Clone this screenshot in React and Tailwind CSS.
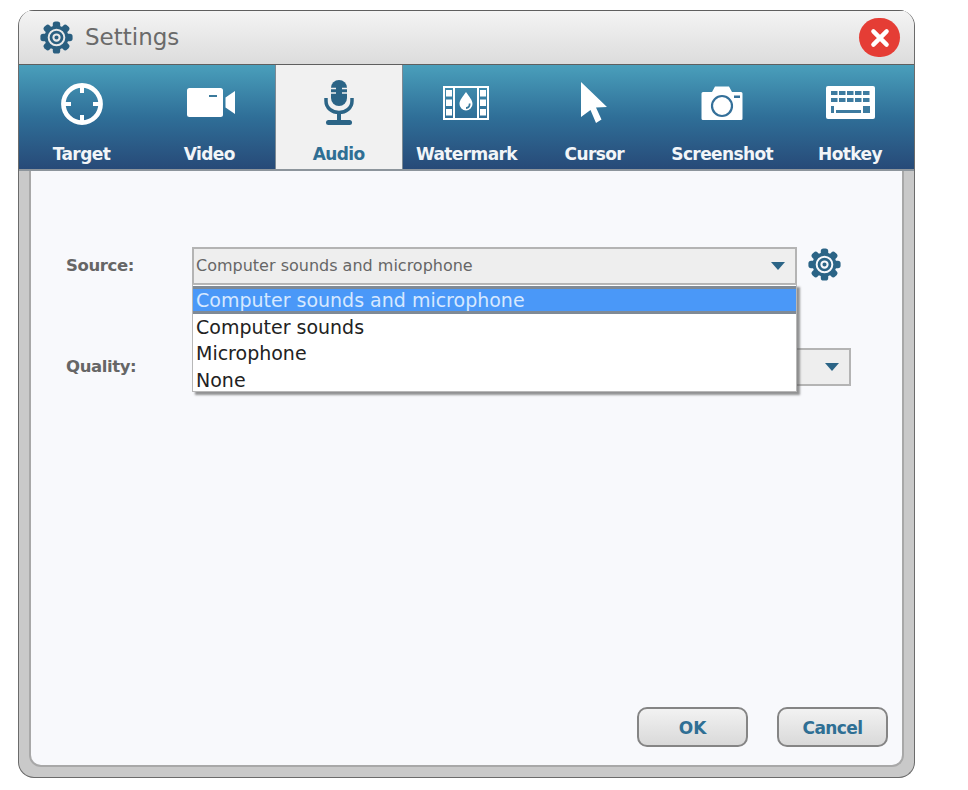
import React from 'react';

const Gear = ({ className, color = '#2b6486', hole = '#f8f9fc' }) => (
  <svg viewBox="0 0 32 32" className={className}>
    <g fill={color}>
      {[0, 45, 90, 135, 180, 225, 270, 315].map((a) => (
        <rect key={a} x="12.4" y="0.4" width="7.2" height="8" rx="2.6" transform={`rotate(${a} 16 16)`} />
      ))}
      <circle cx="16" cy="16" r="11.6" />
    </g>
    <circle cx="16" cy="16" r="7.6" fill="none" stroke={hole} strokeWidth="1.9" />
    <circle cx="16" cy="16" r="3" fill="none" stroke={hole} strokeWidth="2" />
  </svg>
);

const TargetIcon = () => (
  <svg viewBox="0 0 44 44" className="w-[44px] h-[44px] mt-[3px] ml-[2px]">
    <circle cx="22" cy="22" r="18.6" fill="none" stroke="#fff" strokeWidth="4.6" />
    <path d="M22 4v7M22 33v7M4 22h7M33 22h7" stroke="#fff" strokeWidth="4" />
  </svg>
);

const VideoIcon = () => (
  <svg viewBox="0 0 48 30" className="w-[48px] h-[30px] ml-[3px]">
    <rect x="0" y="0" width="36" height="29" rx="2.5" fill="#fff" />
    <rect x="22" y="7" width="8" height="2" fill="#3b7a9c" />
    <path d="M38.500 9.500L48 3v23l-9.500-6.500z" fill="#fff" />
  </svg>
);

const MicIcon = () => (
  <svg viewBox="0 0 30 46" className="w-[30px] h-[46px]">
    <rect x="7" y="0" width="16" height="26" rx="8" fill="#2b6486" />
    <path d="M5 8.500h7M18 8.500h7M5 13h7M18 13h7" stroke="#f1f1f1" strokeWidth="1.500" />
    <path d="M2 18v3c0 7 6 11.500 13 11.500S28 28 28 21v-3" fill="none" stroke="#2b6486" strokeWidth="3.500" />
    <rect x="13" y="32" width="4" height="8" fill="#2b6486" />
    <rect x="2" y="40" width="26" height="5" rx="2.500" fill="#2b6486" />
  </svg>
);

const WatermarkIcon = () => (
  <svg viewBox="0 0 46 34" className="w-[46px] h-[34px]">
    <rect x="1" y="1" width="44" height="32" fill="none" stroke="#fff" strokeWidth="2" />
    <path d="M11 1v32M35 1v32" stroke="#fff" strokeWidth="2" />
    {[4, 13.500, 23].map((y) => (
      <g key={y} fill="#fff">
        <rect x="3" y={y} width="6" height="6.500" />
        <rect x="37" y={y} width="6" height="6.500" />
      </g>
    ))}
    <path d="M23 6c3.500 5 6.500 8 6.500 12a6.500 6.500 0 0 1-13 0c0-4 3-7 6.500-12z" fill="#fff" />
    <path d="M26.500 17.500a3.500 3.500 0 0 1-3.500 4.500" fill="none" stroke="#3b7a9c" strokeWidth="1.800" />
  </svg>
);

const CursorIcon = () => (
  <svg viewBox="0 0 28 42" className="w-[28px] h-[42px]">
    <path d="M1 0l26 25-11 0.500 5.500 12-5.500 3.500-5.500-13L1 35z" fill="#fff" />
  </svg>
);

const CameraIcon = () => (
  <svg viewBox="0 0 42 34" className="w-[42px] h-[34px]">
    <path d="M2 6h9l3-5.500h14l3 5.500h9a1.500 1.500 0 0 1 1.500 1.500v25A1.500 1.500 0 0 1 40 34H2a1.500 1.500 0 0 1-1.500-1.500v-25A1.500 1.500 0 0 1 2 6z" fill="#fff" />
    <circle cx="21" cy="20" r="10" fill="none" stroke="#34709a" strokeWidth="2.200" />
    <rect x="33" y="9.500" width="6" height="2.500" fill="#34709a" />
  </svg>
);

const KeyboardIcon = () => (
  <svg viewBox="0 0 49 33" className="w-[49px] h-[33px]">
    <rect x="0" y="0" width="49" height="33" rx="2" fill="#fff" />
    <g fill="#3d7ba0">
      {[5, 13, 21, 29, 37].map((x) => (
        <rect key={x} x={x} y="5" width="6.500" height="4" />
      ))}
      {[5, 13, 21, 29, 37].map((x) => (
        <rect key={x} x={x} y="12" width="6.500" height="4" />
      ))}
      <rect x="5" y="20" width="3" height="7" />
      <rect x="10" y="24" width="25" height="3" />
      <rect x="37" y="20" width="7" height="7" />
    </g>
  </svg>
);

const tabs = [
  { label: 'Target', icon: <TargetIcon />, nudge: 'pr-[3px]' },
  { label: 'Video', icon: <VideoIcon />, nudge: 'pr-[3px]' },
  { label: 'Audio', icon: <MicIcon />, active: true },
  { label: 'Watermark', icon: <WatermarkIcon /> },
  { label: 'Cursor', icon: <CursorIcon /> },
  { label: 'Screenshot', icon: <CameraIcon /> },
  { label: 'Hotkey', icon: <KeyboardIcon /> },
];

const Caret = () => <span className="w-0 h-0 border-x-[7px] border-x-transparent border-t-[8px] border-t-[#2b6486]" />;

const SelectBox = ({ className, children }) => (
  <div className={`h-[38px] flex items-center justify-between pl-[2px] pr-[10px] bg-[#eeeeee] border-2 border-[#b4b4b4] text-[#666] text-[16px] ${className}`}>
    <span>{children}</span>
    <Caret />
  </div>
);

const App = () => {
  return (
    <div className="w-[968px] h-[790px] bg-white pt-[10px] pl-[18px] font-['DejaVu_Sans',sans-serif] overflow-hidden">
      <div className="w-[897px] h-[768px] flex flex-col rounded-[16px] overflow-hidden border-x border-b border-[#6b6b6b] bg-[#c9c9c9]">
        {/* Title bar */}
        <div className="h-[55px] shrink-0 flex items-center justify-between pl-[21px] pr-[14px] bg-linear-to-b from-[#f4f4f4] to-[#dcdcdc] border-y border-[#5f5f5f]">
          <div className="flex items-center gap-[12px]">
            <Gear className="w-[33px] h-[33px]" color="#2a5f80" hole="#e9e9e9" />
            <span className="text-[23px] text-[#6a6a6a]">Settings</span>
          </div>
          <button className="w-[41px] h-[39px] rounded-full bg-[#e53d35] flex items-center justify-center">
            <svg viewBox="0 0 20 20" className="w-[22px] h-[22px]">
              <path d="M4 4l12 12M16 4L4 16" stroke="#fff" strokeWidth="4" strokeLinecap="round" />
            </svg>
          </button>
        </div>

        {/* Tabs */}
        <div className="h-[106px] shrink-0 grid grid-cols-7 bg-linear-to-b from-[#4a9fbb] via-[#2f6f98] to-[#274a78] border-b-2 border-[#8d959c]">
          {tabs.map((t) => (
            <div
              key={t.label}
              className={`flex flex-col items-center ${t.nudge || ''} ${t.active ? 'bg-[#f1f1f1] border-x border-[#7d8a94] text-[#2f6f94]' : 'text-[#f2f5f8]'}`}
            >
              <div className="h-[79px] flex items-center justify-center pb-[4px]">{t.icon}</div>
              <span className="text-[17px] font-bold leading-[20px] tracking-[-0.6px]">{t.label}</span>
            </div>
          ))}
        </div>

        {/* Body */}
        <div className="flex-1 flex flex-col mx-[10px] mb-[10px] bg-[#f8f9fc] border-x-2 border-b-2 border-[#a8a8a8] rounded-b-[12px] pt-[76px] pl-[35px] pr-[36px] pb-[18px]">
          <div className="relative flex items-center h-[38px]">
            <span className="w-[126px] text-[16.500px] font-bold text-[#666] tracking-[-0.4px]">Source:</span>
            <SelectBox className="w-[605px]">Computer sounds and microphone</SelectBox>
            <Gear className="w-[33px] h-[33px] ml-[11px] mb-[4px]" />

            {/* Open dropdown */}
            <div className="absolute z-10 left-[126px] top-[37px] w-[605px] h-[108px] bg-white border border-[#b8b8b8] shadow-[3px_3px_2px_rgba(90,90,90,0.65)] text-[19px] text-[#222] leading-[26.400px]">
              <div className="h-[28px] mt-px bg-[#4a98f8] border-y-[3px] border-[#7f8a96] text-[#d6e8ff] pl-[3px] leading-[22px]">Computer sounds and microphone</div>
              <div className="pl-[3px]">Computer sounds</div>
              <div className="pl-[3px]">Microphone</div>
              <div className="pl-[3px]">None</div>
            </div>
          </div>

          <div className="flex items-center h-[38px] mt-[63px]">
            <span className="w-[126px] text-[16.500px] font-bold text-[#666] tracking-[-0.4px]">Quality:</span>
            <SelectBox className="w-[659px]"></SelectBox>
          </div>

          <div className="mt-auto flex justify-end gap-[29px] mr-[-22px]">
            <button className="w-[111px] h-[40px] pt-[4px] rounded-[10px] border-2 border-[#858585] bg-linear-to-b from-[#f2f2f2] to-[#d9d9d9] text-[17px] font-bold text-[#2f6f94]">OK</button>
            <button className="w-[111px] h-[40px] pt-[4px] rounded-[10px] border-2 border-[#858585] bg-linear-to-b from-[#f2f2f2] to-[#d9d9d9] text-[17px] font-bold text-[#2f6f94] tracking-[-0.6px]">Cancel</button>
          </div>
        </div>
      </div>
    </div>
  );
};

export default App;
